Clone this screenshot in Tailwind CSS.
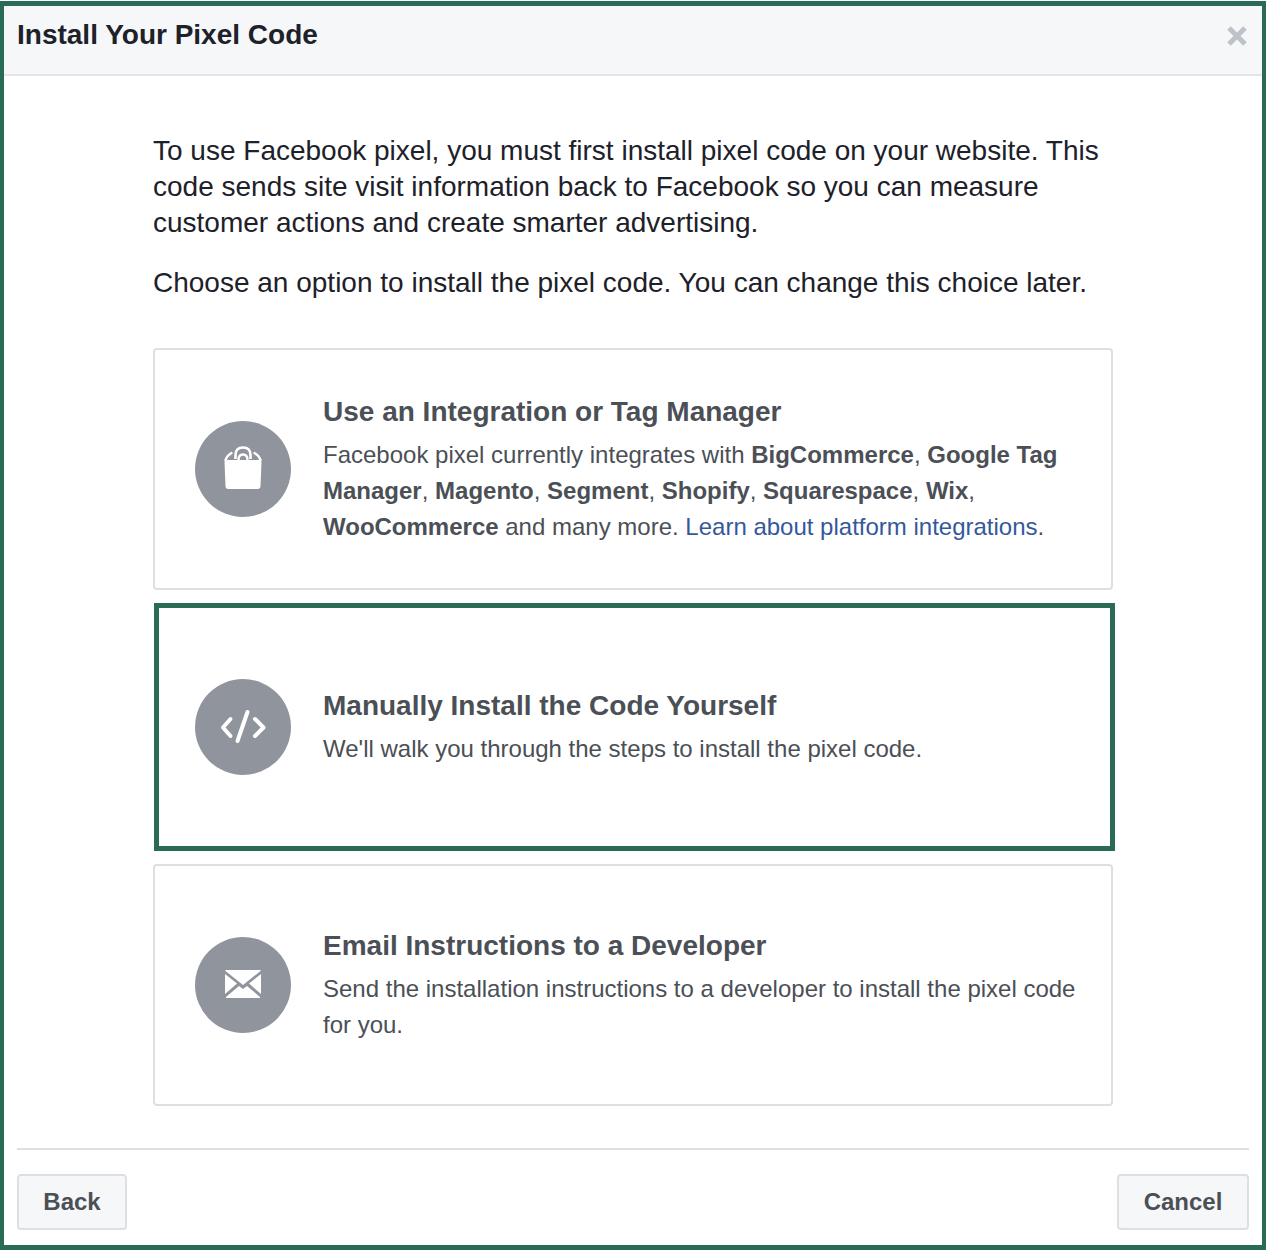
<!DOCTYPE html>
<html lang="en">
<head>
  <meta charset="UTF-8">
  <title>Install Your Pixel Code</title>
  <script src="https://cdn.jsdelivr.net/npm/@tailwindcss/browser@4"></script>
</head>
<body class="bg-white font-['Liberation_Sans',Arial,sans-serif]">
  <div class="w-[1266px] h-[1250px] pt-px bg-white overflow-hidden">
    <div class="h-[1249px] border-x-4 border-y-[5px] border-[#2a6b58] flex flex-col">
      <!-- header -->
      <div class="h-[70px] shrink-0 bg-[#f6f7f9] border-b-2 border-[#e5e5e5] flex items-start justify-between pl-[13px] pr-[15px] pt-[11px]">
        <h1 class="text-[28px] leading-[36px] font-bold text-[#1d2129]">Install Your Pixel Code</h1>
        <svg class="w-5 h-5 mt-[9px]" viewBox="0 0 20 20" fill="none" stroke="#bec2c9" stroke-width="5">
          <path d="M2 2 L18 18 M18 2 L2 18" />
        </svg>
      </div>

      <!-- body -->
      <div class="flex-1 pl-[149px] pr-[149px] pt-[57px]">
        <p class="text-[28px] leading-[36px] text-[#1d2129]">To use Facebook pixel, you must first install pixel code on your website. This code sends site visit information back to Facebook so you can measure customer actions and create smarter advertising.</p>
        <p class="text-[28px] leading-[36px] text-[#1d2129] mt-6">Choose an option to install the pixel code. You can change this choice later.</p>

        <div class="mt-[47px] w-[960px] h-[242px] rounded-[4px] border-2 border-[#dddfe2] flex items-center pl-10 pr-8">
          <div class="w-24 h-24 shrink-0 rounded-full bg-[#90949c] flex items-center justify-center">
            <svg class="w-10 h-12" viewBox="0 0 40 48" fill="none">
              <path d="M1.5 17 Q1.5 15 4 15 H36 Q38.5 15 38.5 17 L37.5 41 Q37.5 44 34.5 44 H5.5 Q2.5 44 2.5 41 Z" fill="#fff" />
              <path d="M12.5 14 V10 Q12.5 2.5 20 2.5 Q27.5 2.5 27.5 10 V14" stroke="#fff" stroke-width="2.6" />
              <path d="M2.5 15 Q4 10.5 8.5 8 M37.5 15 Q36 10.5 31.5 8" stroke="#fff" stroke-width="2.4" stroke-linecap="round" />
              <path d="M15.5 15 Q15.5 9.5 20 9.5 Q24.5 9.5 24.5 15" stroke="#fff" stroke-width="2.4" />
            </svg>
          </div>
          <div class="ml-8">
            <h2 class="text-[28px] leading-[36px] font-bold text-[#4b4f56] pt-px mb-[7px]">Use an Integration or Tag Manager</h2>
            <p class="text-[24px] leading-[36px] text-[#4b4f56]">Facebook pixel currently integrates with <b>BigCommerce</b>, <b>Google Tag Manager</b>, <b>Magento</b>, <b>Segment</b>, <b>Shopify</b>, <b>Squarespace</b>, <b>Wix</b>, <b>WooCommerce</b> and many more. <a class="text-[#365899]" href="#">Learn about platform integrations</a>.</p>
          </div>
        </div>

        <div class="mt-[13px] ml-px w-[961px] h-[248px] border-[5px] border-[#2a6b58] flex items-center pl-[36px] pr-8">
          <div class="w-24 h-24 shrink-0 rounded-full bg-[#90949c] flex items-center justify-center">
            <svg class="w-12 h-12" viewBox="0 0 48 48" fill="none" stroke="#fff" stroke-width="4" stroke-linecap="round" stroke-linejoin="round">
              <path d="M11.5 16 L4 24.5 L11.5 33" />
              <path d="M36 16 L44.5 24.5 L36 33" />
              <path d="M28.5 9 L18.5 38" />
            </svg>
          </div>
          <div class="ml-8">
            <h2 class="text-[28px] leading-[36px] font-bold text-[#4b4f56] pt-px mb-[7px]">Manually Install the Code Yourself</h2>
            <p class="text-[24px] leading-[36px] text-[#4b4f56]">We'll walk you through the steps to install the pixel code.</p>
          </div>
        </div>

        <div class="mt-[13px] w-[960px] h-[242px] rounded-[4px] border-2 border-[#dddfe2] flex items-center pl-10 pr-8">
          <div class="w-24 h-24 shrink-0 rounded-full bg-[#90949c] flex items-center justify-center">
            <svg class="w-10 h-10" viewBox="0 0 40 40" fill="#fff">
              <path d="M3 5 H37 Q38.5 5 37.5 6 L20 20 L2.5 6 Q1.5 5 3 5 Z" />
              <path d="M2 9 L14 18.5 L2 29 Z" />
              <path d="M38 9 L26 18.5 L38 29 Z" />
              <path d="M3 32 L16 21 L20 24 L24 21 L37 32 Q37.5 33 36 33 H4 Q2.5 33 3 32 Z" />
            </svg>
          </div>
          <div class="ml-8">
            <h2 class="text-[28px] leading-[36px] font-bold text-[#4b4f56] pt-px mb-[7px]">Email Instructions to a Developer</h2>
            <p class="text-[24px] leading-[36px] text-[#4b4f56]">Send the installation instructions to a developer to install the pixel code for you.</p>
          </div>
        </div>
      </div>

      <!-- footer -->
      <div class="shrink-0 mx-[13px] h-[97px] border-t-2 border-[#dddfe2] pt-6 flex justify-between items-start">
        <button class="h-14 w-[110px] rounded-[4px] border-2 border-[#dddfe2] bg-[#f6f7f9] text-[24px] font-bold text-[#4b4f56]">Back</button>
        <button class="h-14 w-[132px] rounded-[4px] border-2 border-[#dddfe2] bg-[#f6f7f9] text-[24px] font-bold text-[#4b4f56]">Cancel</button>
      </div>
    </div>
  </div>
</body>
</html>
